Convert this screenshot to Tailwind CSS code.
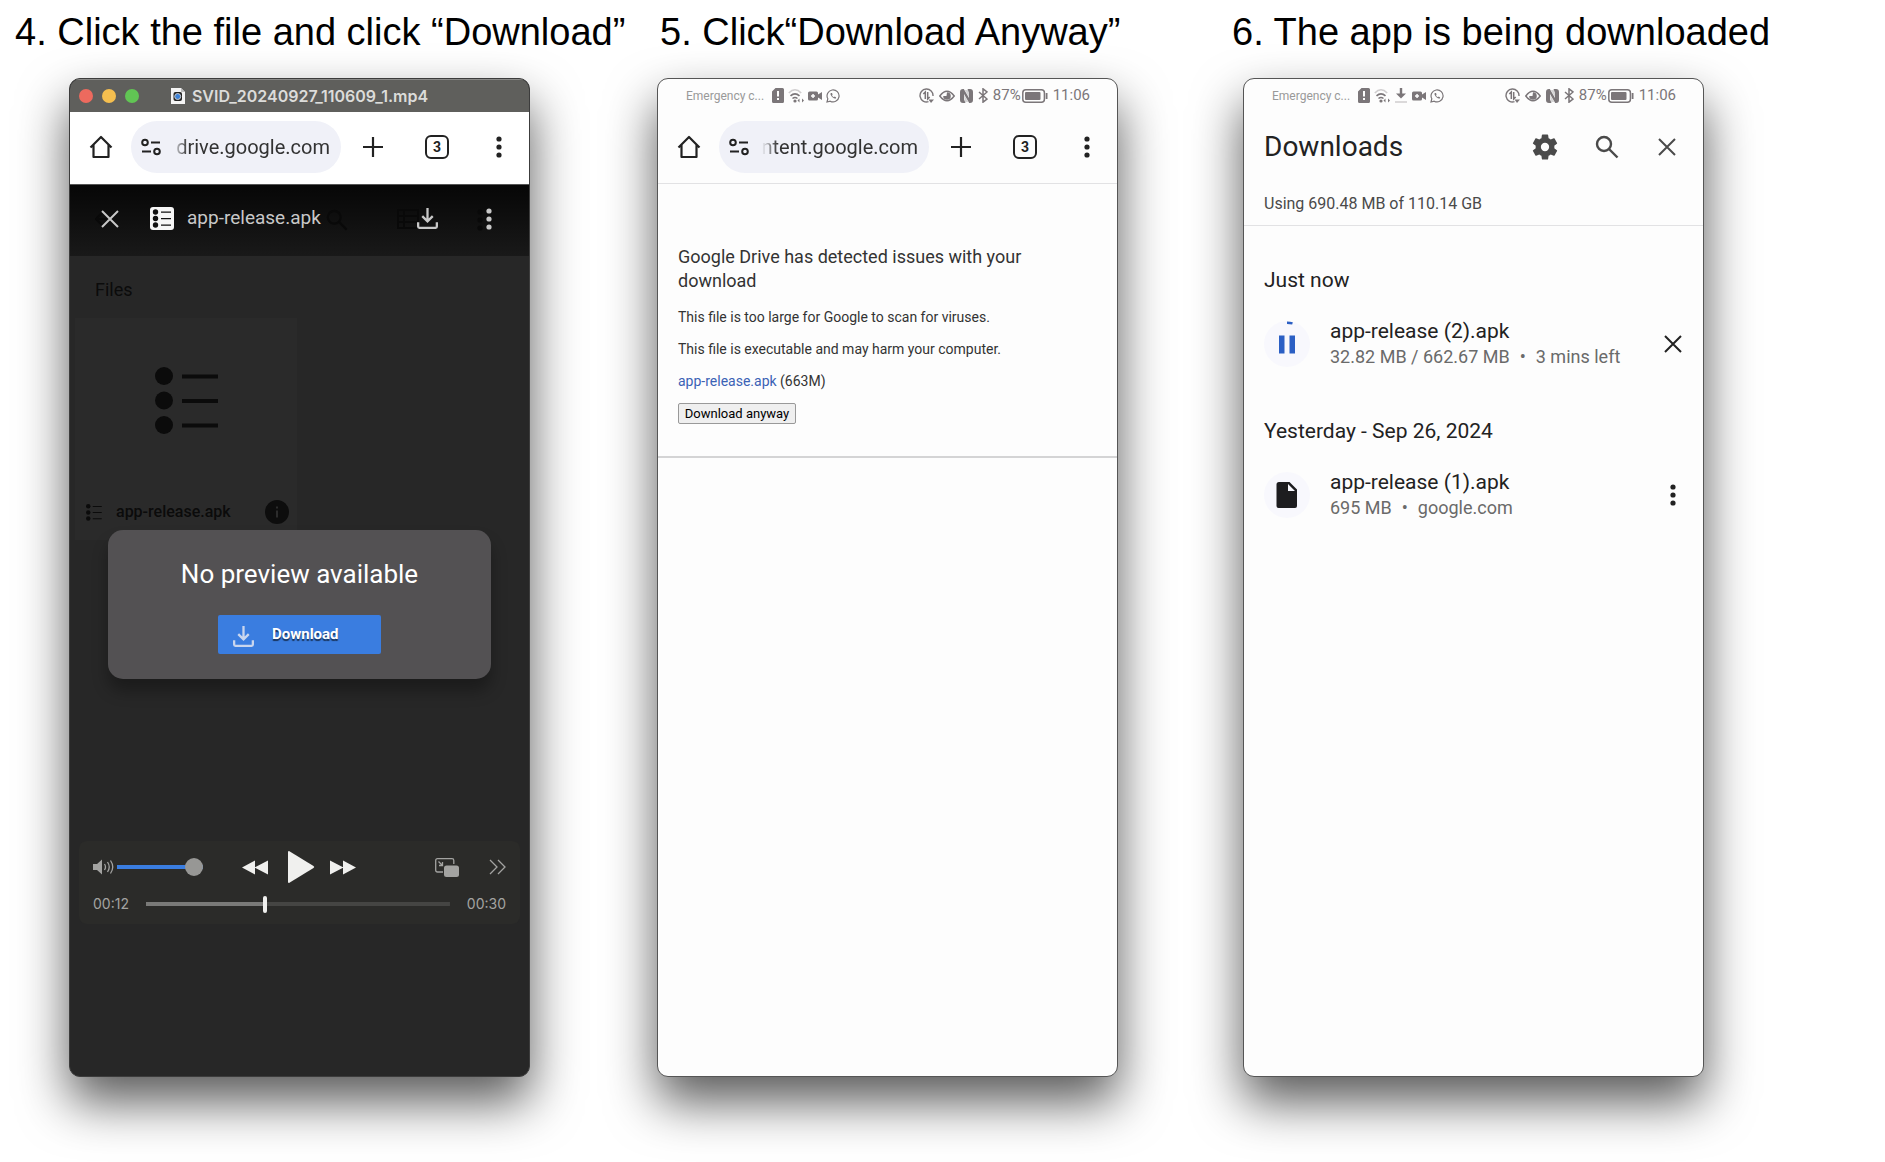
<!DOCTYPE html>
<html lang="en">
<head>
<meta charset="utf-8">
<meta name="viewport" content="width=device-width, initial-scale=1">
<title>Download guide, steps 4 to 6</title>
<script src="https://cdn.jsdelivr.net/npm/@tailwindcss/browser@4"></script>
</head>
<body class="bg-white text-[#222] font-['Roboto',sans-serif]">

<svg class="hidden" aria-hidden="true">
  <symbol id="home" viewBox="0 0 24 24"><path d="M1.500 12.500 12 2l10.500 10.500M4.500 10v12h15V10" fill="none" stroke="currentColor" stroke-width="2.200" stroke-linejoin="round"/></symbol>
  <symbol id="tune" viewBox="0 0 20 18"><g fill="none" stroke="currentColor" stroke-width="2"><circle cx="4" cy="4.500" r="2.800"/><path d="M10 4.500h9M1 13.500h9"/><circle cx="16" cy="13.500" r="2.800"/></g></symbol>
  <symbol id="plus" viewBox="0 0 20 20"><path d="M10 0v20M0 10h20" stroke="currentColor" stroke-width="2.200"/></symbol>
  <symbol id="dots" viewBox="0 0 6 22"><g fill="currentColor"><circle cx="3" cy="3" r="2.600"/><circle cx="3" cy="11" r="2.600"/><circle cx="3" cy="19" r="2.600"/></g></symbol>
  <symbol id="close" viewBox="0 0 18 18"><path d="m1 1 16 16M17 1 1 17" stroke="currentColor" stroke-width="2"/></symbol>
  <symbol id="search" viewBox="0 0 24 24"><g fill="none" stroke="currentColor" stroke-width="2.400"><circle cx="9" cy="9" r="7"/><path d="m14 14 8.500 8.500"/></g></symbol>
  <symbol id="tray" viewBox="0 0 22 22"><path d="M11 0v14M5.500 8.500 11 14l5.500-5.500M1.200 15v4.500q0 1.300 1.300 1.300h17q1.300 0 1.300-1.300V15" fill="none" stroke="currentColor" stroke-width="2.400"/></symbol>
  <symbol id="list" viewBox="0 0 64 68"><g fill="currentColor"><circle cx="9" cy="9" r="9"/><circle cx="9" cy="33.500" r="9"/><circle cx="9" cy="58" r="9"/><path d="M27 7.500h36v4H27zM27 32h36v4H27zM27 56.500h36v4H27z"/></g></symbol>
  <symbol id="gear" viewBox="2 2 20 20"><path fill="currentColor" fill-rule="evenodd" d="M19.140 12.940c.040-.300.060-.610.060-.940 0-.320-.020-.640-.070-.940l2.030-1.580a.49.49 0 0 0 .120-.610l-1.920-3.320a.488.488 0 0 0-.590-.220l-2.390.960c-.500-.380-1.030-.700-1.620-.940l-.360-2.540a.484.484 0 0 0-.480-.410h-3.840c-.240 0-.430.170-.470.410l-.360 2.540c-.590.240-1.130.570-1.620.940l-2.390-.960c-.220-.080-.470 0-.590.220L2.740 8.870c-.120.210-.080.470.120.610l2.030 1.580c-.050.300-.090.630-.090.940s.020.640.070.940l-2.030 1.580a.49.49 0 0 0-.120.610l1.920 3.320c.120.220.370.290.590.220l2.390-.960c.500.380 1.030.700 1.620.940l.360 2.540c.050.240.240.410.480.410h3.840c.240 0 .440-.170.470-.410l.360-2.540c.590-.240 1.130-.560 1.620-.940l2.390.960c.220.080.470 0 .590-.220l1.920-3.320a.49.49 0 0 0-.120-.610zM12 15.200A3.200 3.200 0 1 1 12 8.800a3.200 3.200 0 0 1 0 6.400z"/></symbol>
  <symbol id="sim" viewBox="0 0 12 15"><path fill="currentColor" fill-rule="evenodd" d="M3.500 0H10.500Q12 0 12 1.500v12q0 1.500-1.500 1.500h-9Q0 15 0 13.500V3.500zM5 3v5.500h2V3zM5 10v2h2v-2z"/></symbol>
  <symbol id="wifi" viewBox="0 0 16 15"><g fill="none" stroke="currentColor" stroke-width="1.600"><path d="M.8 5Q7-1.500 13.200 5" opacity=".35"/><path d="M2.500 7.800q4.500-4 9 0M4.500 10.500q2.500-2 5 0"/></g><circle cx="7" cy="13" r="1.600" fill="currentColor"/><path d="M9.500 12.500 11.500 10.500v4zM16 12.500l-2-2v4z" fill="currentColor"/></symbol>
  <symbol id="cam" viewBox="0 0 14 10"><path fill="currentColor" fill-rule="evenodd" d="M1.500.5h7Q10 .5 10 2v1.500L14 1v8l-4-2.500V8q0 1.500-1.500 1.500h-7Q0 9.500 0 8V2Q0 .5 1.500.500zM4.300 3v1.300H3v1.500h1.300V7h1.500V5.800H7V4.300H5.800V3z"/></symbol>
  <symbol id="chat" viewBox="0 0 14 14"><path d="m1 13 .8-3.200A6 6 0 1 1 4.200 12.200z" fill="none" stroke="currentColor" stroke-width="1.200"/><path d="M4.700 4q-.8 1.200.8 3.300t4 2.500l.7-1.300-1.500-.9-.8.700Q6.600 7.700 6 6.300l.6-.8L6 4z" fill="currentColor"/></symbol>
  <symbol id="dl" viewBox="0 0 14 15"><path d="M7 0v6" stroke="currentColor" stroke-width="2.400"/><path d="M2 5.500h10L7 10.500z" fill="currentColor"/><path d="M1 14h12" stroke="currentColor" stroke-opacity=".35" stroke-width="1.400"/></symbol>
  <symbol id="data" viewBox="0 0 15 15"><g fill="none" stroke="currentColor"><path d="M14 8A6.500 6.500 0 1 0 9.500 13.700" stroke-width="1.400"/><path d="M6.300 11V4L4.300 6M8.700 4v7l2-2" stroke-width="1.500"/></g><path d="M9.500 11.500H15L12 15z" fill="currentColor"/></symbol>
  <symbol id="eye" viewBox="0 0 16 12"><path d="M.8 6Q8-3.500 15.200 6 8 15.500.8 6z" fill="none" stroke="currentColor" stroke-width="1.500"/><path d="M8 2.200A3.800 3.800 0 1 1 4.200 6L7.500 6z" fill="currentColor"/></symbol>
  <symbol id="nfc" viewBox="0 0 13 14"><path fill="currentColor" d="M3 0h.8L9 9V3.500L7.500 0H10q3 0 3 3v8q0 3-3 3h-.8L4 5v5.500L5.500 14H3q-3 0-3-3V3q0-3 3-3z"/><path d="M4.800 1 9 8.200V1zM4 5.800 8.200 13H4.800z" fill="currentColor" opacity=".3"/></symbol>
  <symbol id="bt" viewBox="0 0 10 15"><path d="m1 4 8 7-4 3.200V.8L9 4l-8 7" fill="none" stroke="currentColor" stroke-width="1.500"/></symbol>
  <symbol id="batt" viewBox="0 0 26 14"><rect x=".8" y=".8" width="21.600" height="12.400" rx="3" fill="none" stroke="currentColor" stroke-width="1.500"/><rect x="3" y="3" width="15.500" height="8" rx="1" fill="currentColor"/><path d="M24.600 4v6" stroke="currentColor" stroke-width="1.800"/></symbol>
</svg>

<main class="grid min-h-screen grid-cols-3 content-start pr-[124px] pb-20">

  <!-- Step 4 -->
  <section>
    <h1 class="h-[78px] pl-[15px] pt-3 text-[38px] leading-10 whitespace-nowrap text-black font-['Liberation_Sans',sans-serif]">4. Click the file and click “Download”</h1>
    <div class="ml-[69px] mr-[57px] flex min-h-[999px] flex-col overflow-hidden rounded-[11px] border border-[#3c3c3c] bg-[#272727] shadow-[0_25px_50px_rgba(0,0,0,0.65)]">
      <header class="relative flex h-[33px] items-center justify-center gap-[7px] border-t border-[#8a8a88] bg-[#5f5f5c] text-[#dcdcda]">
        <div class="absolute left-[9px] flex gap-[9px]">
          <span class="size-[14px] rounded-full bg-[#ed6a5e]"></span><span class="size-[14px] rounded-full bg-[#f5bf4f]"></span><span class="size-[14px] rounded-full bg-[#61c554]"></span>
        </div>
        <svg class="h-4 w-[14px]" viewBox="0 0 14 16"><path d="M0 0h10l4 4v12H0z" fill="#f4f4f4"/><path d="M10 0v4h4z" fill="#bbb"/><rect x="2.500" y="4" width="8.500" height="9" rx="2" fill="#222"/><circle cx="6.700" cy="8.500" r="3" fill="#3c82d8" stroke="#ccc"/></svg>
        <p class="text-base leading-5 font-semibold font-['Inter',sans-serif]">SVID_20240927_110609_1.mp4</p>
      </header>
      <nav class="flex h-[73px] items-center border-b border-[#555] bg-white pl-[19px] pr-[27px] pb-[2px]">
        <button aria-label="Home"><svg class="size-6"><use href="#home"/></svg></button>
        <div class="ml-[18px] flex h-[52px] min-w-0 flex-1 items-center justify-between rounded-full bg-[#f0f1f8] pl-[10px] pr-[11px]">
          <svg class="h-[18px] w-5 shrink-0"><use href="#tune"/></svg>
          <div class="flex w-[158px] justify-end overflow-hidden mask-l-from-90% mask-l-to-100%"><input aria-label="Address" class="w-60 shrink-0 text-right text-xl text-[#333]" value="drive.google.com"></div>
        </div>
        <button class="ml-[22px]" aria-label="New tab"><svg class="size-5"><use href="#plus"/></svg></button>
        <button class="ml-[42px] flex size-6 items-center justify-center rounded-md border-2 border-[#222] text-sm font-bold">3</button>
        <button class="ml-[47px]" aria-label="Menu"><svg class="h-[22px] w-[6px]"><use href="#dots"/></svg></button>
      </nav>

      <div class="relative flex-1 text-[#0b0b0b]">
        <div class="relative flex h-[71px] items-center bg-linear-to-b from-[#070707] to-[#191919] pl-[31px] pr-[37px] pb-1 text-[#c8c8c8]">
          <div class="absolute inset-0 text-[#090909]" aria-hidden="true">
            <svg class="absolute top-6 left-[256px] size-[22px]"><use href="#search"/></svg>
            <svg class="absolute top-6 left-[327px] h-5 w-[22px]" viewBox="0 0 22 20"><path d="M1 1h20v18H1zM1 7h20M1 13h20M7 1v18" fill="none" stroke="currentColor" stroke-width="2"/></svg>
            <svg class="absolute top-6 left-[407px] h-[22px] w-[6px]"><use href="#dots"/></svg>
            <svg class="absolute top-7 left-[25px] size-3" viewBox="0 0 12 12"><path d="M7 0 1 6l6 6M1 6h11" fill="none" stroke="currentColor" stroke-width="2"/></svg>
          </div>
          <button class="relative" aria-label="Close"><svg class="size-[18px]"><use href="#close"/></svg></button>
          <svg class="relative ml-[31px] h-[23px] w-6" viewBox="0 0 24 23"><rect width="24" height="23" rx="3" fill="#f6f6f6"/><g fill="#111"><circle cx="5.500" cy="5" r="2.700"/><circle cx="5.500" cy="11.500" r="2.700"/><circle cx="5.500" cy="18" r="2.700"/><path d="M11 4.500h10v1.200H11zM11 11h10v1.200H11zM11 17.500h10v1.200H11z"/></g></svg>
          <p class="relative ml-[13px] flex-1 text-[19px]">app-release.apk</p>
          <button class="relative" aria-label="Download file"><svg class="size-[21px]"><use href="#tray"/></svg></button>
          <button class="relative ml-[48px]" aria-label="More"><svg class="h-[22px] w-[6px]"><use href="#dots"/></svg></button>
        </div>
        <h2 class="pt-5 pl-[25px] text-lg leading-7">Files</h2>
        <div class="mt-[14px] ml-[5px] flex h-[222px] w-[222px] flex-col bg-[#2a2a2a]">
          <div class="flex flex-1 items-center justify-center pl-[2px]"><svg class="h-[68px] w-[64px]"><use href="#list"/></svg></div>
          <div class="flex h-[56px] items-center pl-[11px] pr-2">
            <svg class="h-[17px] w-4"><use href="#list"/></svg>
            <p class="ml-[14px] flex-1 text-base font-medium">app-release.apk</p>
            <svg class="size-6" viewBox="0 0 24 24" role="img" aria-label="Details"><circle cx="12" cy="12" r="12" fill="#0d0d0d"/><path d="M11 6.500h2v2h-2zM11 10.500h2v7h-2z" fill="#2c2c2c"/></svg>
          </div>
        </div>
        <div role="dialog" class="absolute inset-x-[38px] top-[345px] flex h-[149px] flex-col items-center rounded-[15px] bg-[#535153] shadow-[0_12px_16px_rgba(0,0,0,0.3)]">
          <p class="mt-7 text-[26px] leading-8 text-white">No preview available</p>
          <button class="mt-[25px] flex h-[39px] w-[163px] items-center gap-[18px] rounded-xs bg-[#3a7de0] pl-[15px] text-[15px] font-bold text-white text-shadow-[0_2px_1px_rgba(0,0,0,0.6)]"><svg class="mt-1 size-[21px] text-[#c9d6ee]"><use href="#tray"/></svg>Download</button>
        </div>
        <div class="absolute inset-x-[9px] top-[656px] h-[83px] rounded-lg bg-[#2b2b29] px-[14px] text-[#a3a3a1]">
          <div class="flex h-[52px] items-center">
            <svg class="h-4 w-[21px]" viewBox="0 0 21 16"><path d="M0 5h4l5-4.500v15L4 11H0z" fill="currentColor"/><path d="M11.500 5q2 3 0 6M14.500 3q3.500 5 0 10M17.500 1.500q4.500 6.500 0 13" fill="none" stroke="currentColor" stroke-width="1.300"/></svg>
            <input type="range" aria-label="Volume" value="100" class="ml-[3px] h-[18px] w-[86px] appearance-none bg-[linear-gradient(#3a7de0,#3a7de0)] bg-[length:100%_4px] bg-center bg-no-repeat [&::-webkit-slider-thumb]:size-[18px] [&::-webkit-slider-thumb]:appearance-none [&::-webkit-slider-thumb]:rounded-full [&::-webkit-slider-thumb]:bg-[#979795]">
            <button class="ml-[39px] text-[#f0f0ee]" aria-label="Rewind"><svg class="h-[15px] w-[26px]" viewBox="0 0 26 15"><path d="M13 .5v14L0 7.500zM26 .5v14L12.500 7.500z" fill="currentColor"/></svg></button>
            <button class="ml-[19px] text-[#f0f0ee]" aria-label="Play"><svg class="h-8 w-7" viewBox="0 0 28 32"><path d="M1 1q0-1 1-1l24.500 15q1.500 1 0 2L2 32q-1 0-1-1z" fill="currentColor"/></svg></button>
            <button class="ml-[15px] text-[#f0f0ee]" aria-label="Fast forward"><svg class="h-[15px] w-[26px]" viewBox="0 0 26 15"><path d="M13 .5v14L26 7.500zM0 .5v14L13.500 7.500z" fill="currentColor"/></svg></button>
            <button class="ml-auto" aria-label="Picture in picture"><svg class="h-[19px] w-6" viewBox="0 0 24 19"><path d="M8 14H2.500Q.7 14 .7 12.200V2.500Q.7.700 2.500.700h14.500q1.800 0 1.800 1.800V6M3.500 3.500l4 4M7.500 4v3.500H4" fill="none" stroke="currentColor" stroke-width="1.300"/><rect x="9" y="7.500" width="15" height="11.500" rx="2.500" fill="currentColor"/></svg></button>
            <button class="ml-[30px]" aria-label="More controls"><svg class="h-4 w-[17px]" viewBox="0 0 17 16"><path d="m1 1 7 7-7 7M9 1l7 7-7 7" fill="none" stroke="currentColor" stroke-width="1.300"/></svg></button>
          </div>
          <div class="flex h-[22px] items-center gap-[17px] text-sm font-['Inter',sans-serif]">
            <span>00:12</span>
            <input type="range" aria-label="Position" value="39" class="h-[17px] min-w-0 flex-1 appearance-none bg-[linear-gradient(90deg,#7a7a78_39%,#454543_39%)] bg-[length:100%_4px] bg-center bg-no-repeat [&::-webkit-slider-thumb]:h-[17px] [&::-webkit-slider-thumb]:w-1 [&::-webkit-slider-thumb]:appearance-none [&::-webkit-slider-thumb]:rounded-xs [&::-webkit-slider-thumb]:bg-[#f0f0ee]">
            <span>00:30</span>
          </div>
        </div>
      </div>
    </div>
  </section>

  <!-- Step 5 -->
  <section>
    <h1 class="h-[78px] pl-[73px] pt-3 text-[38px] leading-10 whitespace-nowrap text-black font-['Liberation_Sans',sans-serif]">5. Click“Download Anyway”</h1>
    <div class="ml-[70px] mr-[56px] flex min-h-[999px] flex-col overflow-hidden rounded-[11px] border border-[#555] bg-[#fdfdfd] shadow-[0_25px_50px_rgba(0,0,0,0.65)]">
      <div class="flex h-[33px] items-center pl-7 pr-[27px] text-[#7b7679]">
        <span class="text-xs text-[#999]">Emergency c...</span>
        <div class="ml-2 flex items-center gap-1">
          <svg class="h-[15px] w-3"><use href="#sim"/></svg><svg class="h-[15px] w-4"><use href="#wifi"/></svg><svg class="h-[10px] w-[14px]"><use href="#cam"/></svg><svg class="size-[14px]"><use href="#chat"/></svg>
        </div>
        <div class="ml-auto flex items-center gap-[5px] text-[15px]">
          <svg class="size-[15px]"><use href="#data"/></svg><svg class="h-3 w-4"><use href="#eye"/></svg><svg class="h-[14px] w-[13px]"><use href="#nfc"/></svg><svg class="h-[15px] w-[10px]"><use href="#bt"/></svg>
          <span class="flex items-center gap-px">87%<svg class="h-[14px] w-[26px]"><use href="#batt"/></svg></span><span>11:06</span>
        </div>
      </div>
      <nav class="flex h-[72px] items-center border-b border-[#e2e2e4] pl-[19px] pr-[27px] pb-px">
        <button aria-label="Home"><svg class="size-6"><use href="#home"/></svg></button>
        <div class="ml-[18px] flex h-[52px] min-w-0 flex-1 items-center justify-between rounded-full bg-[#f0f1f8] pl-[10px] pr-[11px]">
          <svg class="h-[18px] w-5 shrink-0"><use href="#tune"/></svg>
          <div class="flex w-[156px] justify-end overflow-hidden mask-l-from-90% mask-l-to-100%"><input aria-label="Address" class="w-60 shrink-0 text-right text-xl text-[#333]" value="ntent.google.com"></div>
        </div>
        <button class="ml-[22px]" aria-label="New tab"><svg class="size-5"><use href="#plus"/></svg></button>
        <button class="ml-[42px] flex size-6 items-center justify-center rounded-md border-2 border-[#222] text-sm font-bold">3</button>
        <button class="ml-[47px]" aria-label="Menu"><svg class="h-[22px] w-[6px]"><use href="#dots"/></svg></button>
      </nav>
      <div class="border-b-2 border-[#d4d4d5] px-5 pt-[61px] pb-8 text-sm leading-5 text-[#333]">
        <h2 class="pr-14 text-lg leading-6">Google Drive has detected issues with your download</h2>
        <p class="mt-[14px]">This file is too large for Google to scan for viruses.</p>
        <p class="mt-3">This file is executable and may harm your computer.</p>
        <p class="mt-3"><a href="#apk" class="text-[#3b62b5]">app-release.apk</a> (663M)</p>
        <button class="mt-3 block h-[21px] w-[118px] rounded-xs border border-[#999] bg-[#efefef] text-[13px] leading-none text-black">Download anyway</button>
      </div>
    </div>
  </section>

  <!-- Step 6 -->
  <section>
    <h1 class="h-[78px] pl-[58px] pt-3 text-[38px] leading-10 whitespace-nowrap text-black font-['Liberation_Sans',sans-serif]">6. The app is being downloaded</h1>
    <div class="ml-[69px] mr-[57px] flex min-h-[999px] flex-col overflow-hidden rounded-[11px] border border-[#555] bg-[#fdfdfd] shadow-[0_25px_50px_rgba(0,0,0,0.65)]">
      <div class="flex h-[33px] items-center pl-7 pr-[27px] text-[#7b7679]">
        <span class="text-xs text-[#999]">Emergency c...</span>
        <div class="ml-2 flex items-center gap-1">
          <svg class="h-[15px] w-3"><use href="#sim"/></svg><svg class="h-[15px] w-4"><use href="#wifi"/></svg><svg class="h-[15px] w-[14px]"><use href="#dl"/></svg><svg class="h-[10px] w-[14px]"><use href="#cam"/></svg><svg class="size-[14px]"><use href="#chat"/></svg>
        </div>
        <div class="ml-auto flex items-center gap-[5px] text-[15px]">
          <svg class="size-[15px]"><use href="#data"/></svg><svg class="h-3 w-4"><use href="#eye"/></svg><svg class="h-[14px] w-[13px]"><use href="#nfc"/></svg><svg class="h-[15px] w-[10px]"><use href="#bt"/></svg>
          <span class="flex items-center gap-px">87%<svg class="h-[14px] w-[26px]"><use href="#batt"/></svg></span><span>11:06</span>
        </div>
      </div>
      <header class="border-b border-[#e2e2e4] pl-5 pr-[27px] text-[#4a4a4a]">
        <div class="flex h-[70px] items-center">
          <h2 class="flex-1 text-[28px] text-[#222]">Downloads</h2>
          <button aria-label="Settings"><svg class="size-[26px]"><use href="#gear"/></svg></button>
          <button class="ml-[37px]" aria-label="Search"><svg class="size-6"><use href="#search"/></svg></button>
          <button class="ml-[39px]" aria-label="Close"><svg class="size-[18px]"><use href="#close"/></svg></button>
        </div>
        <p class="pt-3 pb-[11px] text-base leading-5">Using 690.48 MB of 110.14 GB</p>
      </header>
      <div class="pl-5 pr-[21px] pt-[42px]">
        <h3 class="text-[21px] leading-6">Just now</h3>
        <div class="mt-7 flex h-[47px] items-center">
          <svg class="size-[46px]" viewBox="0 0 46 46"><circle cx="23" cy="23" r="23" fill="#f8f8fd"/><path d="M23 1.700q3 0 5.500.7" stroke="#2b5fc4" stroke-width="2.400" fill="none"/><path d="M15 14.500h5.500v18H15zM25.500 14.500H31v18h-5.500z" fill="#2b5fc4"/></svg>
          <div class="ml-5 flex-1">
            <p class="text-[21px] leading-[26px]">app-release (2).apk</p>
            <p class="flex gap-[10px] text-lg leading-[26px] text-[#6a6a6a]"><span>32.82 MB / 662.67 MB</span><span>•</span><span>3 mins left</span></p>
          </div>
          <button aria-label="Cancel"><svg class="size-[18px]"><use href="#close"/></svg></button>
        </div>
        <h3 class="mt-[52px] text-[21px] leading-6">Yesterday - Sep 26, 2024</h3>
        <div class="mt-7 flex h-[47px] items-center">
          <svg class="size-[46px]" viewBox="0 0 46 46"><circle cx="23" cy="23" r="23" fill="#f8f8fd"/><path d="M15 10h10.500L33 17.500V34q0 2-2 2H14.500q-2 0-2-2V12.500q0-2.500 2.500-2.500zM24 12v7h7z" fill="#1d1d1f" fill-rule="evenodd"/></svg>
          <div class="ml-5 flex-1">
            <p class="text-[21px] leading-[26px]">app-release (1).apk</p>
            <p class="flex gap-[10px] text-lg leading-[26px] text-[#6a6a6a]"><span>695 MB</span><span>•</span><span>google.com</span></p>
          </div>
          <button class="mr-[6px]" aria-label="Options"><svg class="h-[22px] w-[6px]"><use href="#dots"/></svg></button>
        </div>
      </div>
    </div>
  </section>
</main>
</body>
</html>
